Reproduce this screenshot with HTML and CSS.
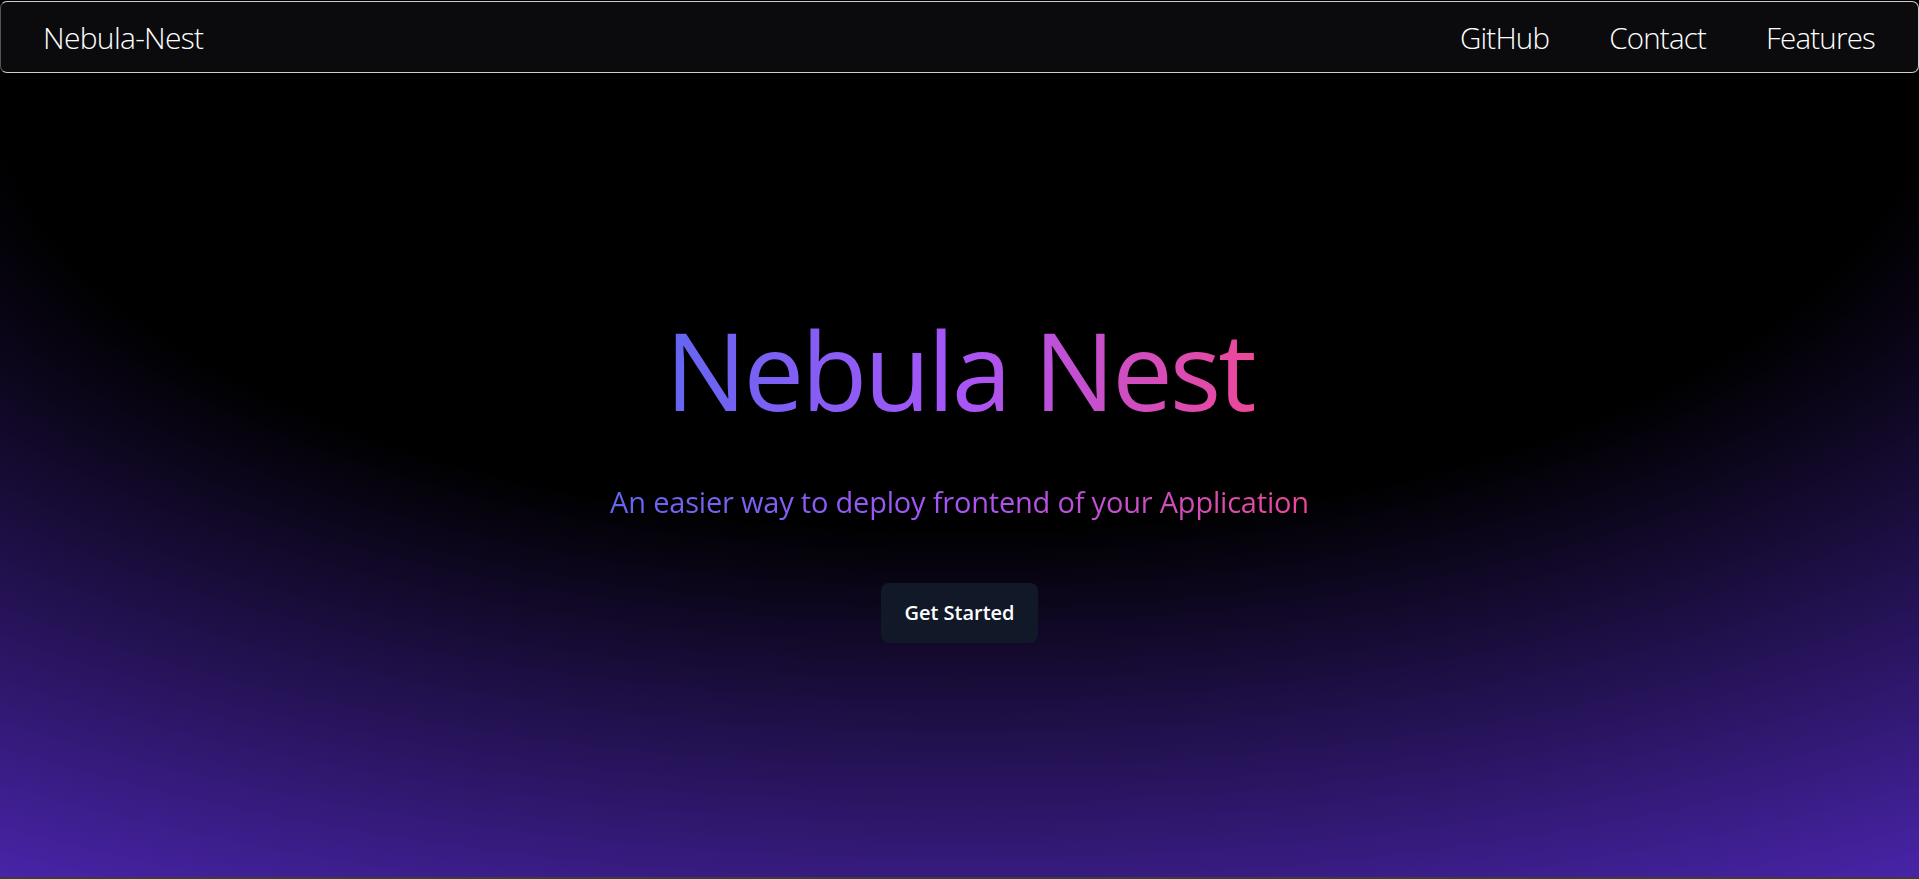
FILE: index.html
```html
<!DOCTYPE html>
<html lang="en">
<head>
<meta charset="utf-8">
<title>Nebula Nest</title>
<link rel="stylesheet" href="styles.css">
</head>
<body>
<div class="page">
  <header class="navbar">
    <a class="brand" href="#">Nebula-Nest</a>
    <nav class="links">
      <a href="#">GitHub</a>
      <a href="#">Contact</a>
      <a href="#">Features</a>
    </nav>
  </header>
  <main class="hero">
    <h1 class="title">Nebula Nest</h1>
    <p class="subtitle">An easier way to deploy frontend of your Application</p>
    <button class="cta" type="button">Get Started</button>
  </main>
</div>
</body>
</html>
```
FILE: styles.css
```css
* { box-sizing: border-box; }
html, body { margin: 0; padding: 0; }
body {
  background: #3c3c3c;
  font-family: "Open Sans", "Noto Sans", sans-serif;
  color: #fff;
}
.page {
  height: calc(100vh - 2px);
  display: flex;
  flex-direction: column;
  background: radial-gradient(125% 125% at 50% 10%, #000 40%, #63e 100%);
  overflow: hidden;
}
.navbar {
  margin-top: 1px;
  height: 72px;
  flex: none;
  display: flex;
  align-items: center;
  justify-content: space-between;
  padding: 2px 43px 0 42px;
  background: #0b0b0e;
  border: 1px solid #cfcfcf;
  border-left-color: #555;
  border-radius: 7px;
}
.brand, .links a {
  color: #fff;
  text-decoration: none;
  font-weight: 300;
  font-size: 29.5px;
  line-height: 40px;
  letter-spacing: -0.8px;
}
.brand { font-size: 30px; letter-spacing: -0.7px; }
.links {
  display: flex;
  gap: 60px;
}
.hero {
  flex: 1;
  display: flex;
  flex-direction: column;
  align-items: center;
  justify-content: center;
  padding-top: 8px;
}
.title, .subtitle {
  background: linear-gradient(to right, #6366f1, #a855f7, #ec4899);
  -webkit-background-clip: text;
  background-clip: text;
  color: transparent;
  margin: 0;
  text-align: center;
}
.title {
  font-size: 108px;
  font-weight: 400;
  line-height: 108px;
  letter-spacing: -3px;
}
.subtitle {
  margin-top: 60px;
  font-size: 29px;
  line-height: 36px;
  font-weight: 400;
  letter-spacing: -0.2px;
}
.cta {
  margin-top: 63px;
  font-family: inherit;
  font-size: 20px;
  font-weight: 600;
  line-height: 28px;
  color: #fff;
  background: #111827;
  border: none;
  border-radius: 8px;
  padding: 16px 23px;
  cursor: pointer;
}
```
